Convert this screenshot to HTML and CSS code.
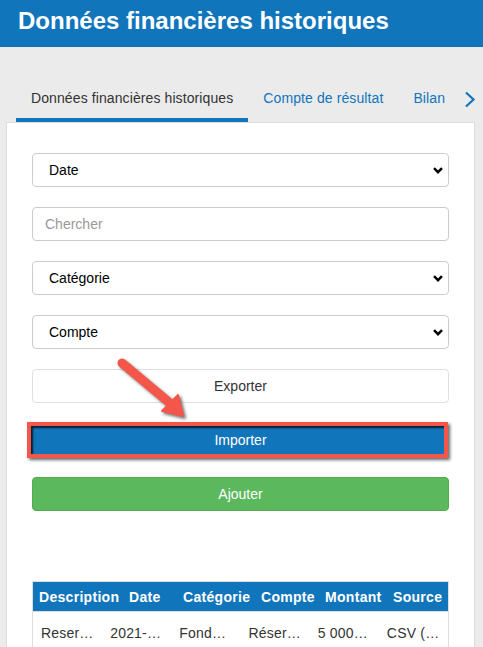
FILE: index.html
```html
<!DOCTYPE html>
<html lang="fr">
<head>
<meta charset="utf-8">
<title>Données financières historiques</title>
<link rel="stylesheet" href="styles.css">
</head>
<body>
<header class="topbar">
  <h1 class="topbar-title">Données financières historiques</h1>
</header>

<nav class="tabs">
  <a class="tab tab-active">Données financières historiques</a>
  <a class="tab">Compte de résultat</a>
  <a class="tab">Bilan</a>
  <span class="tab-next">
    <svg width="12" height="17" viewBox="0 0 12 17"><path d="M2 1.5 L9.5 8.5 L2 15.5" fill="none" stroke="#1175bb" stroke-width="2.2"/></svg>
  </span>
</nav>

<main class="card">
  <form class="filters">
    <select class="field field-select"><option>Date</option></select>
    <input class="field" type="text" placeholder="Chercher">
    <select class="field field-select"><option>Catégorie</option></select>
    <select class="field field-select"><option>Compte</option></select>
    <button type="button" class="btn btn-default">Exporter</button>
    <button type="button" class="btn btn-primary btn-highlight">Importer</button>
    <button type="button" class="btn btn-success">Ajouter</button>
  </form>

  <div class="data-table">
    <div class="table-head">
      <div class="th">Description</div>
      <div class="th">Date</div>
      <div class="th">Catégorie</div>
      <div class="th">Compte</div>
      <div class="th">Montant</div>
      <div class="th">Source</div>
    </div>
    <div class="table-row">
      <div class="td">Reserve legale</div>
      <div class="td">2021-12-31</div>
      <div class="td">Fonds propres</div>
      <div class="td">Réserves</div>
      <div class="td">5 000,00 €</div>
      <div class="td">CSV (import)</div>
    </div>
  </div>
</main>

<svg class="annotation-arrow" width="90" height="75" viewBox="0 0 90 75">
  <line x1="12" y1="13" x2="61" y2="54" stroke="#f4574a" stroke-width="9" stroke-linecap="round"/>
  <polygon points="73,66 52,61 68,45" fill="#f4574a" stroke="#f4574a" stroke-width="2" stroke-linejoin="round"/>
</svg>
</body>
</html>
```

FILE: styles.css
```css
* { box-sizing: border-box; }

body {
  margin: 0;
  background: #ebebeb;
  font-family: "Liberation Sans", Arial, sans-serif;
  font-size: 14px;
  color: #333;
  position: relative;
  overflow: hidden;
  height: 647px;
}

.topbar {
  background: #1175bb;
  height: 47px;
  padding: 0 18px;
}

.topbar-title {
  margin: 0;
  color: #fff;
  font-size: 24px;
  font-weight: bold;
  line-height: 41px;
  white-space: nowrap;
}

.tabs {
  display: flex;
  align-items: flex-start;
  margin-top: 31px;
  padding-left: 16px;
}

.tab {
  display: block;
  padding: 10px 15px;
  line-height: 20px;
  letter-spacing: 0.1px;
  border-bottom: 4px solid transparent;
  color: #1175bb;
  white-space: nowrap;
}

.tab-active {
  color: #333;
  border-bottom-color: #1175bb;
}

.tab-next {
  display: flex;
  padding: 13px 0 0 4px;
}

.card {
  margin-left: 6px;
  width: 469px;
  background: #fff;
  border: 1px solid #dcdcdc;
  padding: 30px 25px 40px;
  min-height: 600px;
}

.filters {
  display: grid;
  gap: 20px;
}

.field {
  display: block;
  width: 100%;
  height: 34px;
  margin: 0;
  border: 1px solid #cccccc;
  border-radius: 4px;
  background: #fff;
  font-family: inherit;
  font-size: 14px;
  color: #000;
  padding: 0 12px;
}

.field::placeholder { color: #999; }

.field-select {
  -webkit-appearance: none;
  appearance: none;
  padding-left: 16px;
  background-image: url("data:image/svg+xml,%3Csvg xmlns='http://www.w3.org/2000/svg' width='10' height='7' viewBox='0 0 10 7'%3E%3Cpath d='M1 1.2 L5 5.2 L9 1.2' fill='none' stroke='%23000' stroke-width='2.4'/%3E%3C/svg%3E");
  background-repeat: no-repeat;
  background-position: right 5px center;
}

.btn {
  display: block;
  width: 100%;
  height: 34px;
  margin: 0;
  border: 1px solid #e0e0e0;
  border-radius: 4px;
  font-family: inherit;
  font-size: 14px;
  padding: 0 12px;
  text-align: center;
}

.btn-default {
  background: #fff;
  color: #333;
}

.btn-primary {
  background: #1175bb;
  color: #fff;
}

.btn-highlight {
  width: auto;
  height: 36px;
  margin: -1px 1px -1px -5px;
  border: 4px solid #f4574a;
  border-radius: 0;
  padding-left: 18px;
  padding-right: 12px;
  box-shadow: 2px 2px 3px rgba(0, 0, 0, 0.6), inset 2px 2px 2px rgba(0, 0, 0, 0.75);
}

.btn-success {
  background: #5cb85c;
  border-color: #52ad52;
  color: #fff;
}

.data-table {
  margin-top: 70px;
  border: 1px solid #dddddd;
  border-bottom: 0;
  width: 417px;
}

.table-head {
  display: grid;
  grid-template-columns: 90px 54px 78px 64px 68px 1fr;
  background: #1175bb;
  border-bottom: 1px solid #dddddd;
}

.th {
  color: #fff;
  font-weight: bold;
  letter-spacing: 0.3px;
  line-height: 20px;
  padding: 5px 0 4px 6px;
  white-space: nowrap;
  overflow: hidden;
}

.table-row {
  display: grid;
  grid-template-columns: repeat(6, 1fr);
}

.td {
  line-height: 20px;
  padding: 11px 8px;
  letter-spacing: 0.2px;
  white-space: nowrap;
  overflow: hidden;
  text-overflow: ellipsis;
  color: #333;
}

.annotation-arrow {
  position: absolute;
  left: 110px;
  top: 350px;
  filter: drop-shadow(2px 2px 1.5px rgba(0, 0, 0, 0.55));
}
```
